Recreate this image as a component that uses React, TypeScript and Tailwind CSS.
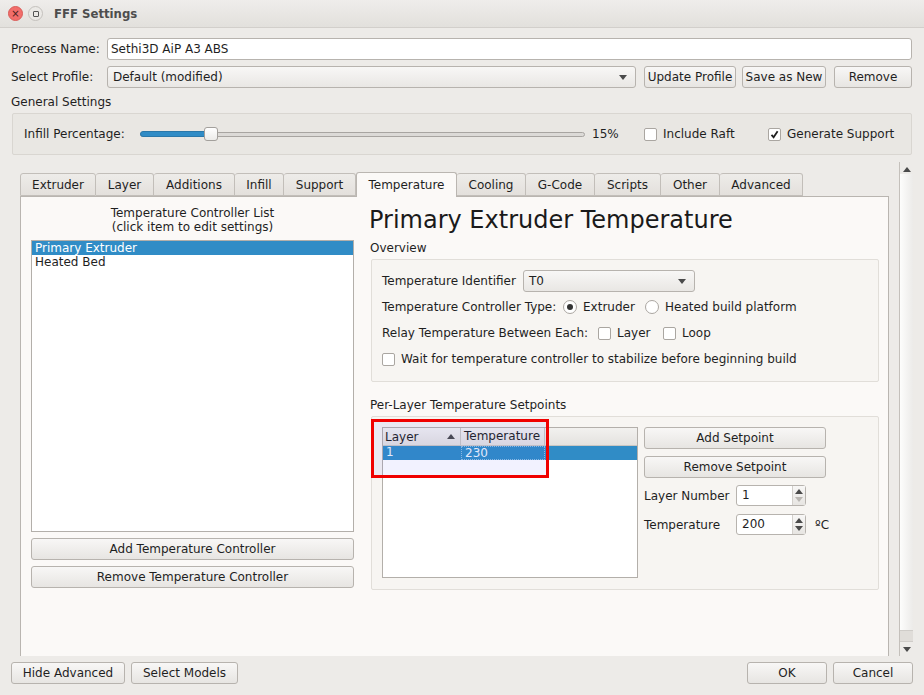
import React from 'react';

// Qt-style "FFF Settings" dialog, Temperature tab

const font = "font-['DejaVu_Sans',sans-serif]";

function Btn({ children, className = '' }: { children: React.ReactNode; className?: string }) {
  return (
    <div
      className={`flex items-center justify-center h-[22px] rounded-[3px] border border-[#b7b3ae] bg-gradient-to-b from-[#f8f7f6] to-[#e7e5e2] text-[12px] text-[#1f1f1f] whitespace-nowrap ${className}`}
    >
      {children}
    </div>
  );
}

function Arrow({ up = false, dim = false }: { up?: boolean; dim?: boolean }) {
  return (
    <svg width="8" height="5" viewBox="0 0 8 5" className="shrink-0">
      <path d={up ? 'M0 5 L4 0 L8 5 Z' : 'M0 0 L8 0 L4 5 Z'} fill={dim ? '#b9b6b2' : '#4a4a4a'} />
    </svg>
  );
}

function Combo({ value, className = '' }: { value: string; className?: string }) {
  return (
    <div
      className={`flex items-center h-[22px] pl-[5px] pr-[8px] rounded-[3px] border border-[#b7b3ae] bg-gradient-to-b from-[#f8f7f6] to-[#e9e7e4] ${className}`}
    >
      <span className="flex-1">{value}</span>
      <Arrow />
    </div>
  );
}

function Check({ checked = false }: { checked?: boolean }) {
  return (
    <div className="w-[13px] h-[13px] shrink-0 rounded-[2px] border border-[#aaa6a1] bg-white flex items-center justify-center">
      {checked && (
        <svg width="9" height="9" viewBox="0 0 9 9">
          <path d="M1.5 4.8 L3.6 7.3 L7.6 1.2" stroke="#1f1f1f" strokeWidth="1.8" fill="none" />
        </svg>
      )}
    </div>
  );
}

function Radio({ checked = false }: { checked?: boolean }) {
  return (
    <div className="w-[14px] h-[14px] shrink-0 rounded-full border border-[#aaa6a1] bg-white flex items-center justify-center">
      {checked && <div className="w-[6px] h-[6px] rounded-full bg-[#333]" />}
    </div>
  );
}

function Spin({ value, dimDown = false }: { value: string; dimDown?: boolean }) {
  return (
    <div className="flex shrink-0 h-[21px] w-[70px] rounded-[3px] border border-[#b7b3ae] bg-white">
      <span className="flex-1 pl-[5px] leading-[19px]">{value}</span>
      <div className="w-[13px] border-l border-[#d3d0cc] bg-gradient-to-b from-[#f8f7f6] to-[#e7e5e2] flex flex-col items-center justify-center gap-[3px]">
        <Arrow up />
        <Arrow dim={dimDown} />
      </div>
    </div>
  );
}

const tabs = [
  ['Extruder', 76],
  ['Layer', 58],
  ['Additions', 81],
  ['Infill', 49],
  ['Support', 72],
  ['Temperature', 101],
  ['Cooling', 69],
  ['G-Code', 69],
  ['Scripts', 66],
  ['Other', 59],
  ['Advanced', 83],
] as const;

export default function App() {
  return (
    <div className={`${font} w-[924px] h-[695px] overflow-hidden bg-[#edebe8] text-[12px] text-[#1f1f1f] flex flex-col`}>
      {/* title bar */}
      <div className="h-[28px] shrink-0 flex items-center gap-[5px] pl-[8px] bg-gradient-to-b from-[#efedeb] to-[#e2e0dc] border-b border-[#d2cfcb]">
        <div className="w-[15px] h-[15px] rounded-full bg-[#f26d6a] border border-[#d95c58] flex items-center justify-center text-[10px] leading-none text-[#4a2020]">
          ×
        </div>
        <div className="w-[15px] h-[15px] rounded-full bg-[#ebe9e6] border border-[#c4c1bd] flex items-center justify-center">
          <div className="w-[6px] h-[6px] border border-[#555] rounded-[1px]" />
        </div>
        <span className="ml-[6px] font-['DejaVu_Sans_Condensed','DejaVu_Sans',sans-serif] text-[13px] font-bold text-[#4d4d4d]">
          FFF Settings
        </span>
      </div>

      {/* header fields */}
      <div className="px-[11px] pt-[10px] shrink-0">
        <div className="flex items-center h-[22px]">
          <span className="w-[96px]">Process Name:</span>
          <div className="flex-1 h-[22px] rounded-[3px] border border-[#b7b3ae] bg-white pl-[3px] leading-[21px] mr-[1px]">
            Sethi3D AiP A3 ABS
          </div>
        </div>
        <div className="flex items-center h-[22px] mt-[6px]">
          <span className="w-[96px]">Select Profile:</span>
          <Combo value="Default (modified)" className="w-[529px]" />
          <Btn className="ml-[8px] w-[92px]">Update Profile</Btn>
          <Btn className="ml-[6px] w-[84px]">Save as New</Btn>
          <Btn className="ml-[8px] w-[78px]">Remove</Btn>
        </div>
        <div className="mt-[7px] h-[14px] leading-[15px]">General Settings</div>
        <div className="mt-[4px] ml-[1px] mr-[1px] h-[42px] rounded-[2px] border border-[#d9d6d1] bg-[#e9e7e3] flex items-center pl-[11px]">
          <span className="w-[116px]">Infill Percentage:</span>
          {/* slider */}
          <div className="relative w-[445px] h-[14px] flex items-center">
            <div className="w-full h-[5px] rounded-full border border-[#a8a5a1] bg-[#dcdad7]" />
            <div className="absolute left-0 top-[4px] w-[70px] h-[6px] rounded-l-full bg-[#308cc6] border border-[#2a78aa]" />
            <div className="absolute left-[64px] top-[0px] w-[14px] h-[14px] rounded-[3px] border border-[#a3a09c] bg-gradient-to-b from-white to-[#ecebe9]" />
          </div>
          <span className="ml-[7px] w-[52px]">15%</span>
          <Check />
          <span className="ml-[6px] w-[105px]">Include Raft</span>
          <Check checked />
          <span className="ml-[6px]">Generate Support</span>
        </div>
      </div>

      {/* scroll area */}
      <div className="mt-[7px] ml-[12px] h-[494px] shrink-0 flex">
        <div className="w-[887px] pl-[8px] pt-[9px] overflow-hidden">
          {/* tab bar */}
          <div className="flex items-end h-[25px]">
            {tabs.map(([name, w], i) => {
              const sel = name === 'Temperature';
              return (
                <div
                  key={name}
                  style={{ width: w }}
                  className={
                    sel
                      ? 'h-[25px] -mb-[1px] relative z-10 flex items-center justify-center rounded-t-[3px] border border-b-0 border-[#bab6b1] bg-[#fbf9f7]'
                      : i === 0
                        ? 'h-[23px] flex items-center justify-center rounded-t-[3px] border border-[#c2beb9] bg-gradient-to-b from-[#eeece9] to-[#e3e0dc]'
                        : 'h-[23px] flex items-center justify-center rounded-t-[3px] border border-l-0 border-[#c2beb9] bg-gradient-to-b from-[#eeece9] to-[#e3e0dc]'
                  }
                >
                  {name}
                </div>
              );
            })}
          </div>
          {/* pane */}
          <div className="w-[869px] h-[480px] border border-b-0 border-[#b9b5b0] bg-[#fbf9f7] flex pl-[10px] pt-[9px]">
            {/* left */}
            <div className="w-[323px] flex flex-col">
              <div className="text-center leading-[14px]">
                Temperature Controller List
                <br />
                (click item to edit settings)
              </div>
              <div className="mt-[6px] h-[292px] border border-[#b3afaa] bg-white">
                <div className="h-[14px] leading-[14px] pl-[3px] bg-[#308cc6] text-white">Primary Extruder</div>
                <div className="h-[15px] leading-[15px] pl-[3px]">Heated Bed</div>
              </div>
              <Btn className="mt-[6px]">Add Temperature Controller</Btn>
              <Btn className="mt-[6px]">Remove Temperature Controller</Btn>
            </div>

            {/* right */}
            <div className="ml-[16px] w-[509px] flex flex-col">
              <div className="h-[28px] leading-[28px] text-[24px] text-[#1a1a1a] -ml-[1px]">
                Primary Extruder Temperature
              </div>
              <div className="mt-[7px] h-[14px] leading-[14px]">Overview</div>
              <div className="mt-[4px] ml-[1px] h-[123px] rounded-[2px] border border-[#e1ded9] bg-[#f7f5f2] pl-[10px] pt-[8px]">
                <div className="h-[26px] flex items-center">
                  <span className="w-[141px]">Temperature Identifier</span>
                  <Combo value="T0" className="w-[172px]" />
                </div>
                <div className="h-[26px] flex items-center">
                  <span className="w-[181px]">Temperature Controller Type:</span>
                  <Radio checked />
                  <span className="ml-[6px] w-[62px]">Extruder</span>
                  <Radio />
                  <span className="ml-[6px]">Heated build platform</span>
                </div>
                <div className="h-[26px] flex items-center">
                  <span className="w-[216px]">Relay Temperature Between Each:</span>
                  <Check />
                  <span className="ml-[6px] w-[46px]">Layer</span>
                  <Check />
                  <span className="ml-[6px]">Loop</span>
                </div>
                <div className="h-[26px] flex items-center">
                  <Check />
                  <span className="ml-[6px]">Wait for temperature controller to stabilize before beginning build</span>
                </div>
              </div>

              <div className="mt-[16px] h-[14px] leading-[14px]">Per-Layer Temperature Setpoints</div>
              <div className="relative mt-[4px] ml-[1px] h-[174px] rounded-[2px] border border-[#e1ded9] bg-[#f7f5f2] pl-[10px] pt-[10px] flex">
                {/* table */}
                <div className="w-[256px] h-[151px] border border-[#b3afaa] bg-white">
                  <div className="flex h-[18px] border-b border-[#c9c6c2] bg-gradient-to-b from-[#f2f1ef] to-[#e4e2df]">
                    <div className="w-[78px] flex items-center pl-[2px] pr-[5px] border-r border-[#c9c6c2]">
                      <span className="flex-1">Layer</span>
                      <Arrow up />
                    </div>
                    <div className="w-[84px] pl-[3px] leading-[17px] border-r border-[#c9c6c2]">Temperature</div>
                  </div>
                  <div className="flex h-[14px] leading-[13px] bg-[#308cc6] text-[#eef6fc]">
                    <span className="w-[78px] pl-[3px]">1</span>
                    <span className="w-[84px] pl-[3px] border border-dotted border-[#8fc0e2]">230</span>
                  </div>
                </div>
                {/* controls */}
                <div className="ml-[6px] w-[182px] flex flex-col">
                  <Btn className="h-[21px]">Add Setpoint</Btn>
                  <Btn className="h-[21px] mt-[7px]">Remove Setpoint</Btn>
                  <div className="mt-[7px] flex items-center">
                    <span className="w-[92px] shrink-0">Layer Number</span>
                    <Spin value="1" dimDown />
                  </div>
                  <div className="mt-[8px] flex items-center">
                    <span className="w-[92px] shrink-0">Temperature</span>
                    <Spin value="200" />
                    <span className="ml-[9px] whitespace-nowrap">ºC</span>
                  </div>
                </div>
                {/* highlight box */}
                <div className="absolute -left-[1px] top-[2px] w-[178px] h-[59px] border-[3px] border-[#f00000] bg-[#4040ff]/[0.07]" />
              </div>
            </div>
          </div>
        </div>
        {/* scrollbar */}
        <div className="w-[14px] h-[494px] border-l border-[#c4c0bb] flex flex-col">
          <div className="h-[12px] flex items-center justify-center pt-[2px]">
            <Arrow up />
          </div>
          <div className="flex-1 bg-gradient-to-r from-[#fdfdfc] to-[#ecebe9]" />
          <div className="h-[12px] bg-[#e0ddd9] border-y border-[#cfccc8]" />
          <div className="h-[14px] flex items-center justify-center">
            <Arrow />
          </div>
        </div>
      </div>

      {/* bottom buttons */}
      <div className="mt-[6px] px-[11px] flex items-center">
        <Btn className="w-[114px]">Hide Advanced</Btn>
        <Btn className="ml-[6px] w-[107px]">Select Models</Btn>
        <div className="flex-1" />
        <Btn className="w-[80px] border-[#3f86c2]">OK</Btn>
        <Btn className="ml-[6px] w-[80px]">Cancel</Btn>
      </div>
    </div>
  );
}
